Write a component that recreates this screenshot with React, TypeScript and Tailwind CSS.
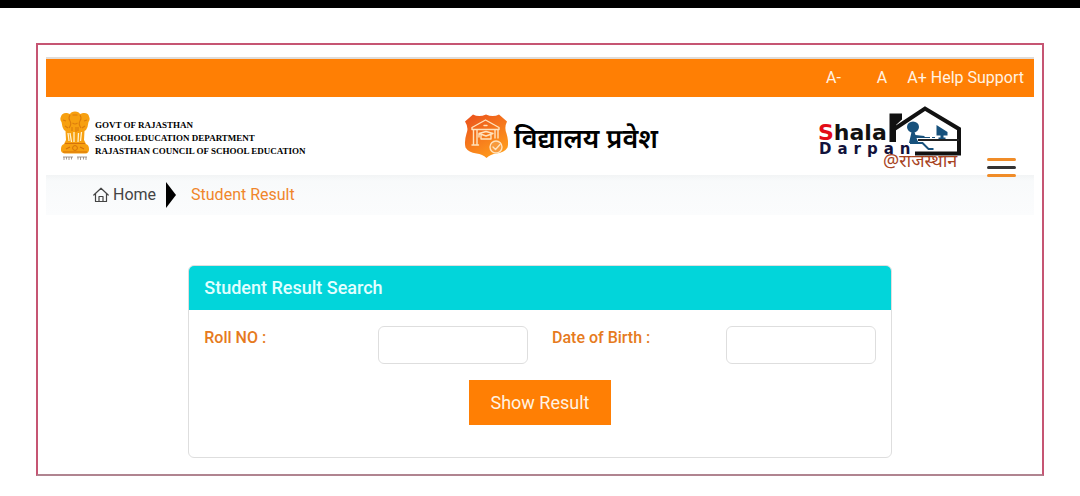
import React from "react";

function Emblem() {
  return (
    <svg viewBox="0 0 30 50" className="h-[50px] w-[30px] shrink-0" aria-hidden="true">
      <path
        d="M10 3q1-2.500 5-2.500t5 2.500l3-1q5.500-.5 6 3.500 1.500 3-.5 5.500l-1 5q-1 3-3 4l-.5 9 2 4q3 1 3 5 .2 4-3.500 4.500h-21q-4-.5-3.500-4.500 0-4 3-5l2-4-.5-9q-2-1-3-4l-1-5Q-.5 8.500 1 5.500 2 1.500 7 2z"
        fill="#f7a010"
      />
      <path d="M10 22l1.500 9M14 21v10M18.500 22l-.5 9M21.500 21l-1 9M8 22l1 8" stroke="#fff3d0" strokeWidth="1.300" fill="none" />
      <path
        d="M10 4q-2 3 0 6t-1 7M20 4q2 3 0 6t1 7M12.500 4h5M3 9l3 1M27 9l-3 1M5 15l3 2M25 15l-3 2M12.500 12q2.500 2 5 0M12 16v4M16 16v5M18 16v4"
        stroke="#dc7c0c"
        strokeWidth="1.100"
        fill="none"
      />
      <path d="M5 32.500h20M3 41h24" stroke="#d5720a" strokeWidth="1.200" />
      <circle cx="15" cy="37" r="2.400" fill="none" stroke="#d5720a" />
      <path d="M6 38l4-2M20 36l4 2" stroke="#d5720a" strokeWidth="1.200" />
      <path d="M3 46h10M17 46h10" stroke="#8a8078" strokeWidth=".8" />
      <path d="M4 46v3M6.500 46v2.500M9 46v3M11.500 46v2.500M18 46v2.500M20.500 46v3M23.500 46v2.500M26 46v3" stroke="#8a8078" strokeWidth=".8" />
    </svg>
  );
}

function ShieldLogo() {
  return (
    <svg viewBox="0 0 44 46" className="h-[46px] w-11 shrink-0" aria-hidden="true">
      <defs>
        <linearGradient id="shield" x1="0" y1="0" x2="0.600" y2="1">
          <stop offset="0" stopColor="#ea4f1c" />
          <stop offset="1" stopColor="#ff9a1c" />
        </linearGradient>
      </defs>
      <path
        d="M9 1.500q6 3 13 0 7 3 13 0l8 7q-3 6-.5 12 2.500 8 1 14-3 5-11 6-6 .5-10 4.500-4-4-10-4.500-8-1-11-6-1.500-6 1-14Q5 14.500 1 8.500z"
        fill="url(#shield)"
      />
      <g fill="none" stroke="#ffe3bd" strokeWidth="1.400" strokeLinejoin="round" strokeLinecap="round">
        <path d="M8 14.500L21.500 7 35 14.500v2H8zM20 12.500h3" />
        <path d="M9.500 17v14M13 17v14M8 32h6.500M31 17v8M34 17v8" />
        <path d="M15 20.500l7-2 7 2-7 2.500zM17 22.500v3.500h10v-3.500M15 21v3" />
        <circle cx="32" cy="34" r="6" fill="#f79a3c" />
        <path d="M29 34l2.500 2.500 4.500-5" />
      </g>
    </svg>
  );
}

function ShalaDarpanLogo() {
  return (
    <svg viewBox="0 0 146 70" className="h-[70px] w-[146px] self-end" role="img" aria-label="Shala Darpan">
      <path d="M72.500 8.500h12.500v6l-6 5.500v17h-6.500z" fill="#111" />
      <path d="M75 25.500L108 3.500 142 24v24.500H98" fill="none" stroke="#111" strokeWidth="4" />
      <path d="M101 35h41" stroke="#222" strokeWidth="1.800" />
      <ellipse cx="96" cy="22" rx="6" ry="5.500" fill="#17517c" />
      <path d="M94.500 27h3l1 3 9 1v2h-8l2 5h-9.500z" fill="#17517c" />
      <path d="M93 38h12.500l6 6h5" fill="none" stroke="#17517c" strokeWidth="2" />
      <path d="M107 32.500h6M115 32.500h3" stroke="#17517c" strokeWidth="1" />
      <path d="M119.500 20l11 7v3.500h-4v2h2v1.500h-7v-1.500h2v-2h-4z" fill="#17517c" />
      <text x="1" y="35" className="font-['DejaVu_Sans'] text-[22px] font-bold" fill="#111">
        <tspan fill="#e30b17">S</tspan>hala
      </text>
      <text x="2" y="49" className="font-['DejaVu_Sans'] text-[15px] font-bold tracking-[0.4em]" fill="#12123c">
        Darpan
      </text>
      <text x="66" y="62" className="font-['Noto_Sans','Noto_Sans_Devanagari',sans-serif] text-[18px]" fill="#a8441f">
        @राजस्थान
      </text>
    </svg>
  );
}

function HomeIcon() {
  return (
    <svg viewBox="0 0 16 16" className="size-4" fill="none" stroke="#444" strokeWidth="1.200" strokeLinejoin="round" strokeLinecap="round" aria-hidden="true">
      <path d="M.8 8L8 1.200 15.200 8M2.500 6.800v7.700h11V6.800M6 14.500V9.500h4v5" />
    </svg>
  );
}

export default function App() {
  return (
    <div className="min-h-screen bg-white font-[Roboto,sans-serif] text-base">
      <div className="h-2 bg-black" />
      <div className="mx-9 mt-[35px] border-2 border-[#c65573] border-b-[#b08490] px-2 pt-3 pb-4">
        <nav className="flex h-10 items-center justify-end border-t-2 border-[#e0dcd8] bg-[#ff7f04] pr-[10px] text-[#fff3e2]">
          <button type="button" className="mr-9">A-</button>
          <button type="button" className="mr-5">A</button>
          <button type="button" className="mr-1">A+</button>
          <a href="#help">Help Support</a>
        </nav>

        <header className="flex h-[78px] justify-between pr-[18px] pl-[14px]">
          <div className="flex flex-1 items-center gap-[5px]">
            <Emblem />
            <p className="pt-1 font-['Liberation_Serif',serif] text-[9px] leading-[13px] font-bold whitespace-nowrap text-black">
              GOVT OF RAJASTHAN
              <br />
              SCHOOL EDUCATION DEPARTMENT
              <br />
              RAJASTHAN COUNCIL OF SCHOOL EDUCATION
            </p>
          </div>
          <div className="ml-[46px] flex items-center gap-[6px]">
            <ShieldLogo />
            <h1 className="pt-3 font-['Noto_Sans_Devanagari','Noto_Sans',sans-serif] text-[27px] leading-9 font-semibold whitespace-nowrap text-black">
              विद्यालय प्रवेश
            </h1>
          </div>
          <div className="flex flex-1 items-center justify-end gap-6">
            <ShalaDarpanLogo />
            <button type="button" aria-label="Menu" className="relative -mb-0.5 flex w-[29px] flex-col gap-[5px] self-end">
              <span className="h-[3px] rounded-sm bg-[#f08c28]" />
              <span className="h-[3px] rounded-sm bg-[#333]" />
              <span className="h-[3px] rounded-sm bg-[#f08c28]" />
            </button>
          </div>
        </header>

        <nav aria-label="Breadcrumb" className="flex h-10 items-center bg-linear-to-b from-[#f2f4f5] via-[#f8fafb] via-15% to-[#fbfcfd] pl-[47px]">
          <a href="#home" className="flex items-center gap-1 text-[#444]">
            <HomeIcon />
            Home
          </a>
          <svg viewBox="0 0 10 26" className="mr-[15px] ml-[10px] h-[26px] w-[10px]" aria-hidden="true">
            <path d="M0 0l10 13L0 26z" fill="#000" />
          </svg>
          <span className="text-[#f0862b]">Student Result</span>
        </nav>

        <main className="mx-auto mt-[50px] w-[71.2%] overflow-hidden rounded-md border border-[#dedede]">
          <h2 className="flex h-11 items-center bg-[#02d5da] px-[15px] text-lg font-medium text-[#e2ffff]">
            Student Result Search
          </h2>
          <form className="px-[15px] pt-4 pb-8" onSubmit={(e) => e.preventDefault()}>
            <div className="grid grid-cols-4 gap-x-6 font-medium text-[#e67a20]">
              <label htmlFor="roll">Roll NO :</label>
              <input id="roll" type="text" className="h-[38px] w-full rounded-md border border-[#dedede] px-3 text-[#333]" />
              <label htmlFor="dob">Date of Birth :</label>
              <input id="dob" type="text" className="h-[38px] w-full rounded-md border border-[#dedede] px-3 text-[#333]" />
            </div>
            <div className="mt-4 flex justify-center">
              <button type="submit" className="h-[45px] bg-[#ff7f04] px-[22px] text-lg text-[#fff3e2]">
                Show Result
              </button>
            </div>
          </form>
        </main>
      </div>
    </div>
  );
}
